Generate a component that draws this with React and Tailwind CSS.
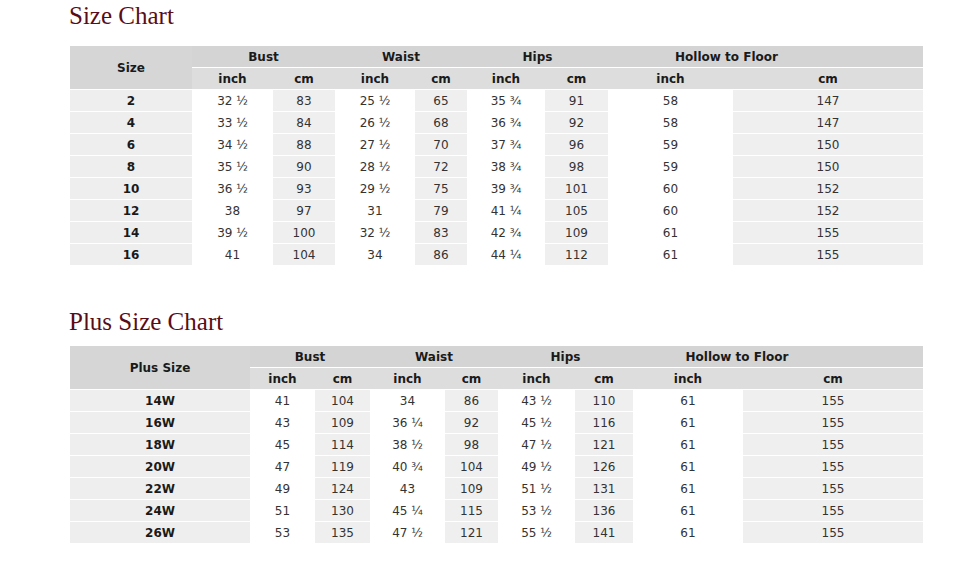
import React from "react";

const size1 = {
  cols: "grid-cols-[122px_81px_62px_80px_52px_78px_63px_125px_190px]",
  label: "Size",
  hollowPad: "pr-[78px]",
  rows: [
    ["2", "32 ½", "83", "25 ½", "65", "35 ¾", "91", "58", "147"],
    ["4", "33 ½", "84", "26 ½", "68", "36 ¾", "92", "58", "147"],
    ["6", "34 ½", "88", "27 ½", "70", "37 ¾", "96", "59", "150"],
    ["8", "35 ½", "90", "28 ½", "72", "38 ¾", "98", "59", "150"],
    ["10", "36 ½", "93", "29 ½", "75", "39 ¾", "101", "60", "152"],
    ["12", "38", "97", "31", "79", "41 ¼", "105", "60", "152"],
    ["14", "39 ½", "100", "32 ½", "83", "42 ¾", "109", "61", "155"],
    ["16", "41", "104", "34", "86", "44 ¼", "112", "61", "155"],
  ],
};

const size2 = {
  cols: "grid-cols-[180px_65px_55px_75px_53px_77px_58px_110px_180px]",
  label: "Plus Size",
  hollowPad: "pr-[82px]",
  rows: [
    ["14W", "41", "104", "34", "86", "43 ½", "110", "61", "155"],
    ["16W", "43", "109", "36 ¼", "92", "45 ½", "116", "61", "155"],
    ["18W", "45", "114", "38 ½", "98", "47 ½", "121", "61", "155"],
    ["20W", "47", "119", "40 ¾", "104", "49 ½", "126", "61", "155"],
    ["22W", "49", "124", "43", "109", "51 ½", "131", "61", "155"],
    ["24W", "51", "130", "45 ¼", "115", "53 ½", "136", "61", "155"],
    ["26W", "53", "135", "47 ½", "121", "55 ½", "141", "61", "155"],
  ],
};

function Table({ t }) {
  const h1 = "h-[21px] bg-[#d4d4d4] flex items-center justify-center font-bold text-[12px] text-[#1a1a1a]";
  const h2 = "h-[21px] bg-[#dddddd] flex items-center justify-center font-bold text-[12px] text-[#1a1a1a]";
  return (
    <div className={`grid ${t.cols} gap-y-px w-[853px] ml-[70px] font-['DejaVu_Sans',sans-serif]`}>
      <div className="row-span-2 bg-[#d6d6d6] flex items-center justify-center font-bold text-[12px] text-[#1a1a1a]">
        {t.label}
      </div>
      <div className={`col-span-2 ${h1}`}>Bust</div>
      <div className={`col-span-2 ${h1}`}>Waist</div>
      <div className={`col-span-2 ${h1}`}>Hips</div>
      <div className={`col-span-2 ${h1} ${t.hollowPad}`}>Hollow to Floor</div>
      {["inch", "cm", "inch", "cm", "inch", "cm", "inch", "cm"].map((x, i) => (
        <div key={i} className={h2}>{x}</div>
      ))}
      {t.rows.map((r, ri) =>
        r.map((c, ci) => (
          <div
            key={ri + "-" + ci}
            className={`h-[21px] flex items-center justify-center text-[12px] ${
              ci === 0
                ? "bg-[#eeeeee] font-bold text-[#1a1a1a]"
                : ci % 2 === 0
                ? "bg-[#efefef] text-[#333333]"
                : "bg-white text-[#333333]"
            }`}
          >
            {c}
          </div>
        ))
      )}
    </div>
  );
}

export default function App() {
  return (
    <div className="w-[980px] h-[564px] bg-white overflow-hidden">
      <div className="pt-[2px] pl-[69px] h-[30px] text-[25px] leading-[28px] text-[#5a0d17] font-['Liberation_Serif',serif]">
        Size Chart
      </div>
      <div className="mt-[16px]">
        <Table t={size1} />
      </div>
      <div className="mt-[43px] pl-[69px] h-[28px] text-[25px] leading-[28px] text-[#5a0d17] font-['Liberation_Serif',serif]">
        Plus Size Chart
      </div>
      <div className="mt-[10px]">
        <Table t={size2} />
      </div>
    </div>
  );
}
